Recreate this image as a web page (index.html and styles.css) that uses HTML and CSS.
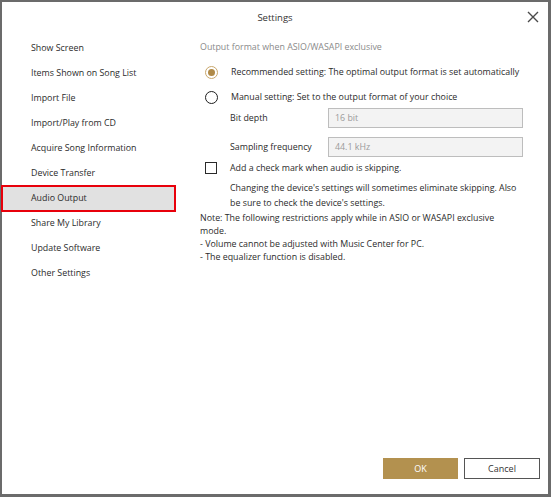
FILE: index.html
```html
<!DOCTYPE html>
<html>
<head>
<meta charset="utf-8">
<link rel="stylesheet" href="styles.css">
</head>
<body>
<div class="window">
  <div class="titlebar">
    <span></span>
    <span class="title">Settings</span>
    <span class="close">
      <svg width="12" height="12" viewBox="0 0 12 12"><path d="M1 1 L11 11 M11 1 L1 11" stroke="#4a4a4a" stroke-width="1.4" fill="none"/></svg>
    </span>
  </div>
  <div class="main">
    <ul class="nav">
      <li>Show Screen</li>
      <li>Items Shown on Song List</li>
      <li>Import File</li>
      <li>Import/Play from CD</li>
      <li>Acquire Song Information</li>
      <li>Device Transfer</li>
      <li class="active">Audio Output</li>
      <li>Share My Library</li>
      <li>Update Software</li>
      <li>Other Settings</li>
    </ul>
    <div class="content">
      <div class="section-title">Output format when ASIO/WASAPI exclusive</div>
      <div class="option first">
        <span class="radio checked"><span class="dot"></span></span>
        <span>Recommended setting: The optimal output format is set automatically</span>
      </div>
      <div class="option second">
        <span class="radio"></span>
        <span>Manual setting: Set to the output format of your choice</span>
      </div>
      <div class="field">
        <span class="label">Bit depth</span>
        <span class="input">16 bit</span>
      </div>
      <div class="field gap">
        <span class="label">Sampling frequency</span>
        <span class="input">44.1 kHz</span>
      </div>
      <div class="option check-row">
        <span class="checkbox"></span>
        <span>Add a check mark when audio is skipping.</span>
      </div>
      <p class="hint">Changing the device's settings will sometimes eliminate skipping. Also be sure to check the device's settings.</p>
      <p class="note">Note: The following restrictions apply while in ASIO or WASAPI exclusive mode.<br>- Volume cannot be adjusted with Music Center for PC.<br>- The equalizer function is disabled.</p>
    </div>
  </div>
  <div class="footer">
    <button class="btn ok">OK</button>
    <button class="btn cancel">Cancel</button>
  </div>
</div>
</body>
</html>
```

FILE: styles.css
```css
* { box-sizing: border-box; }
html, body { margin: 0; padding: 0; }
body {
  font-family: "Open Sans", "Noto Sans", sans-serif;
  font-size: 8.85px;
  color: #2b2b2b;
  background: #fff;
}
.window {
  width: 551px;
  height: 497px;
  border: 2px solid #6b6b6b;
  border-right-width: 3px;
  border-bottom-width: 3px;
  display: flex;
  flex-direction: column;
  background: #fff;
}
.titlebar {
  height: 33px;
  display: grid;
  grid-template-columns: 1fr auto 1fr;
  align-items: center;
}
.title {
  font-size: 9.5px;
  color: #333;
  padding-bottom: 2px;
}
.close {
  justify-self: end;
  margin-right: 9px;
  margin-bottom: 3px;
  display: flex;
}
.main {
  flex: 1;
  display: flex;
}
.nav {
  list-style: none;
  margin: 0;
  padding: 1px 0 0 0;
  width: 173px;
}
.nav li {
  height: 25px;
  line-height: 25px;
  padding-left: 29px;
  white-space: nowrap;
}
.nav li.active {
  background: #e1e1e1;
  outline: 2px solid #e8000b;
  outline-offset: -1px;
}
.content {
  flex: 1;
  padding: 5px 10px 0 25px;
}
.section-title {
  color: #8a8a8a;
  line-height: 15px;
}
.option {
  display: flex;
  align-items: center;
  height: 20px;
}
.option.first { margin-top: 7px; }
.option.second { margin-top: 5px; }
.radio {
  width: 13px;
  height: 13px;
  border-radius: 50%;
  border: 1.5px solid #1e1e1e;
  margin: 0 13px 0 5px;
  display: flex;
  align-items: center;
  justify-content: center;
  flex: none;
}
.radio.checked {
  border-color: #c9a76c;
}
.radio .dot {
  width: 7px;
  height: 7px;
  border-radius: 50%;
  background: #b08a48;
}
.field {
  display: flex;
  align-items: center;
  height: 20px;
  margin-top: 1px;
  padding-left: 30px;
}
.field.gap { margin-top: 9px; }
.label {
  width: 98px;
}
.input {
  width: 195px;
  height: 20px;
  border: 1px solid #bdbdbd;
  background: #f3f3f3;
  color: #9a9a9a;
  line-height: 18px;
  padding-left: 6px;
}
.check-row {
  height: 16px;
  margin-top: 3px;
}
.checkbox {
  width: 12px;
  height: 12px;
  border: 1.5px solid #2a2a2a;
  margin: 0 13px 0 5px;
  flex: none;
}
.hint {
  margin: 5px 0 0 30px;
  width: 287px;
  line-height: 15px;
}
.note {
  margin: 1px 0 0 0;
  width: 306px;
  line-height: 13px;
}
.footer {
  height: 43px;
  display: flex;
  justify-content: flex-end;
  align-items: flex-start;
  gap: 6px;
  padding: 7px 8px 0 0;
}
.btn {
  font-family: "Open Sans", "Noto Sans", sans-serif;
  font-size: 9px;
  height: 21px;
  margin: 0;
  cursor: pointer;
}
.btn.ok {
  width: 75px;
  background: #b3914f;
  color: #fff;
  border: none;
}
.btn.cancel {
  width: 76px;
  background: #fff;
  color: #333;
  border: 1px solid #555;
}
```
